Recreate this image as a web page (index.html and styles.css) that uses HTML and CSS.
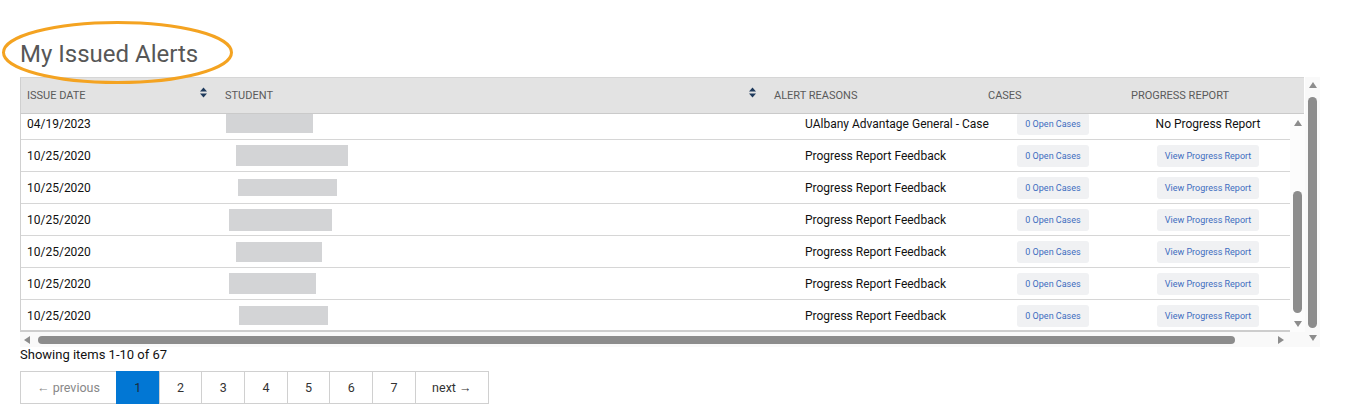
FILE: index.html
```html
<!DOCTYPE html>
<html lang="en">
<head>
<meta charset="utf-8">
<title>My Issued Alerts</title>
<link rel="stylesheet" href="styles.css">
</head>
<body>
<div class="page">
  <h1 class="title">My Issued Alerts</h1>
  <svg class="annot" viewBox="0 0 240 72" aria-hidden="true">
    <ellipse cx="117.5" cy="34.5" rx="114" ry="30" fill="none" stroke="#f4a321" stroke-width="3"/>
  </svg>

  <div class="grid">
    <div class="grid-main">
      <div class="g-head">
        <div class="th th-first"><span>Issue Date</span><svg class="sort" viewBox="0 0 7 10"><path d="M0 4 L3.5 0 L7 4 Z M0 6 L7 6 L3.5 10 Z"/></svg></div>
        <div class="th"><span>Student</span><svg class="sort" viewBox="0 0 7 10"><path d="M0 4 L3.5 0 L7 4 Z M0 6 L7 6 L3.5 10 Z"/></svg></div>
        <div class="th"><span>Alert Reasons</span></div>
        <div class="th"><span>Cases</span></div>
        <div class="th"><span>Progress Report</span></div>
      </div>

      <div class="g-mid">
        <div class="g-view">
          <div class="g-rows">
            <div class="tr">
              <div class="td td-date">04/19/2023</div>
              <div class="td td-student"><span class="ph" style="margin-left:8px;width:87px;height:19px"></span></div>
              <div class="td td-reason">UAlbany Advantage General - Case</div>
              <div class="td td-center"><span class="btn">0 Open Cases</span></div>
              <div class="td td-center">No Progress Report</div>
            </div>
            <div class="tr">
              <div class="td td-date">10/25/2020</div>
              <div class="td td-student"><span class="ph" style="margin-left:18px;width:112px;height:21px"></span></div>
              <div class="td td-reason">Progress Report Feedback</div>
              <div class="td td-center"><span class="btn">0 Open Cases</span></div>
              <div class="td td-center"><span class="btn">View Progress Report</span></div>
            </div>
            <div class="tr">
              <div class="td td-date">10/25/2020</div>
              <div class="td td-student"><span class="ph" style="margin-left:20px;width:99px;height:17px"></span></div>
              <div class="td td-reason">Progress Report Feedback</div>
              <div class="td td-center"><span class="btn">0 Open Cases</span></div>
              <div class="td td-center"><span class="btn">View Progress Report</span></div>
            </div>
            <div class="tr">
              <div class="td td-date">10/25/2020</div>
              <div class="td td-student"><span class="ph" style="margin-left:11px;width:103px;height:22px"></span></div>
              <div class="td td-reason">Progress Report Feedback</div>
              <div class="td td-center"><span class="btn">0 Open Cases</span></div>
              <div class="td td-center"><span class="btn">View Progress Report</span></div>
            </div>
            <div class="tr">
              <div class="td td-date">10/25/2020</div>
              <div class="td td-student"><span class="ph" style="margin-left:18px;width:86px;height:20px"></span></div>
              <div class="td td-reason">Progress Report Feedback</div>
              <div class="td td-center"><span class="btn">0 Open Cases</span></div>
              <div class="td td-center"><span class="btn">View Progress Report</span></div>
            </div>
            <div class="tr">
              <div class="td td-date">10/25/2020</div>
              <div class="td td-student"><span class="ph" style="margin-left:11px;width:87px;height:21px"></span></div>
              <div class="td td-reason">Progress Report Feedback</div>
              <div class="td td-center"><span class="btn">0 Open Cases</span></div>
              <div class="td td-center"><span class="btn">View Progress Report</span></div>
            </div>
            <div class="tr">
              <div class="td td-date">10/25/2020</div>
              <div class="td td-student"><span class="ph" style="margin-left:21px;width:89px;height:19px"></span></div>
              <div class="td td-reason">Progress Report Feedback</div>
              <div class="td td-center"><span class="btn">0 Open Cases</span></div>
              <div class="td td-center"><span class="btn">View Progress Report</span></div>
            </div>
          </div>
        </div>
        <div class="vs vs-inner">
          <span class="arr-up"></span>
          <span class="vthumb"></span>
          <span class="arr-down"></span>
        </div>
      </div>

      <div class="g-bottom">
        <div class="hs">
          <span class="arr-left"></span>
          <span class="hthumb"></span>
          <span class="arr-right"></span>
        </div>
        <div class="corner"></div>
      </div>
    </div>
    <div class="vs vs-outer">
      <span class="arr-up"></span>
      <span class="vthumb"></span>
      <span class="arr-down"></span>
    </div>
  </div>

  <div class="summary">Showing items 1-10 of 67</div>

  <nav class="pager">
    <a class="pg pg-prev">&larr; previous</a>
    <a class="pg pg-num pg-active">1</a>
    <a class="pg pg-num">2</a>
    <a class="pg pg-num">3</a>
    <a class="pg pg-num">4</a>
    <a class="pg pg-num">5</a>
    <a class="pg pg-num">6</a>
    <a class="pg pg-num">7</a>
    <a class="pg pg-next">next &rarr;</a>
  </nav>
</div>
</body>
</html>
```

FILE: styles.css
```css
* { box-sizing: border-box; }

html, body {
  margin: 0;
  padding: 0;
  background: #fff;
}

body {
  font-family: Roboto, "Liberation Sans", Arial, sans-serif;
  color: #111;
}

.page {
  position: relative;
  width: 1354px;
  height: 410px;
  padding: 40px 0 0 20px;
  overflow: hidden;
}

.title {
  margin: 0 0 9px;
  font-size: 24px;
  line-height: 28px;
  font-weight: 400;
  color: #575757;
}

.annot {
  position: absolute;
  left: 0;
  top: 18px;
  width: 240px;
  height: 72px;
  z-index: 5;
  pointer-events: none;
}

/* grid */
.grid {
  display: flex;
  width: 1300px;
  height: 270px;
}

.grid-main {
  width: 1285px;
  display: flex;
  flex-direction: column;
}

.g-head {
  width: 1284px;
  height: 37px;
  flex: none;
  background: #e3e3e3;
  border-top: 1px solid #d6d6d6;
  border-bottom: 1px solid #cacaca;
  border-left: 1px solid #d0d0d0;
  display: grid;
  grid-template-columns: 197px 549px 214px 143px 1fr;
}

.th {
  display: flex;
  align-items: center;
  justify-content: space-between;
  padding: 0 11px 0 7px;
  font-size: 11px;
  color: #5a5a5a;
  text-transform: uppercase;
  white-space: nowrap;
}

.th-first { padding-left: 6px; }

.sort {
  width: 7px;
  height: 11px;
  margin-bottom: 6px;
  fill: #1e3a5c;
}

.g-mid {
  display: flex;
  height: 218px;
  flex: none;
}

.g-view {
  width: 1270px;
  height: 218px;
  border-left: 1px solid #d0d0d0;
  border-bottom: 2px solid #cdcdcd;
  overflow: hidden;
}

.g-rows { margin-top: -6px; }

.tr {
  display: grid;
  grid-template-columns: 197px 580px 182px 146px 164px;
  height: 32px;
  border-bottom: 1px solid #d6d6d6;
  align-items: center;
  font-size: 12px;
  color: #111;
}

.td { white-space: nowrap; }
.td-date { padding-left: 6px; }
.td-student { display: flex; align-items: center; }
.ph { display: block; background: #d3d4d6; }
.td-reason { padding-left: 7px; }
.td-center { display: flex; justify-content: center; }

.btn {
  display: block;
  height: 22px;
  line-height: 22px;
  padding: 0 8px;
  border-radius: 3px;
  background: #f0f1f3;
  color: #3d6dc0;
  font-size: 9px;
}

/* scrollbars */
.vs {
  width: 15px;
  flex: none;
  background: #f9f9f9;
  display: flex;
  flex-direction: column;
  align-items: center;
}

.vs-inner { height: 218px; padding-top: 6px; background: #fcfcfc; }
.vs-outer { height: 270px; padding-top: 5px; }

.arr-up, .arr-down, .arr-left, .arr-right {
  display: block;
  width: 0;
  height: 0;
  flex: none;
}

.arr-up {
  border-left: 4.5px solid transparent;
  border-right: 4.5px solid transparent;
  border-bottom: 6px solid #8c8c8c;
}

.arr-down {
  border-left: 4.5px solid transparent;
  border-right: 4.5px solid transparent;
  border-top: 6px solid #8c8c8c;
}

.vthumb {
  display: block;
  width: 9px;
  border-radius: 5px;
  background: #8c8c8c;
  flex: none;
}

.vs-inner .vthumb { margin-top: 65px; height: 122px; }
.vs-inner .arr-down { margin-top: 8px; }
.vs-outer .vthumb { margin-top: 9px; height: 231px; }
.vs-outer .arr-down { margin-top: 7px; }

.g-bottom {
  display: flex;
  height: 15px;
  flex: none;
}

.hs {
  width: 1270px;
  display: flex;
  align-items: center;
  background: #f9f9f9;
}

.arr-left {
  margin-left: 4px;
  border-top: 4px solid transparent;
  border-bottom: 4px solid transparent;
  border-right: 6px solid #8c8c8c;
}

.hthumb {
  display: block;
  margin-left: 8px;
  width: 1197px;
  height: 8px;
  border-radius: 4px;
  background: #8c8c8c;
}

.arr-right {
  margin-left: 43px;
  border-top: 4px solid transparent;
  border-bottom: 4px solid transparent;
  border-left: 6px solid #8c8c8c;
}

.corner { width: 15px; background: #f9f9f9; }

/* footer */
.summary {
  font-size: 13px;
  line-height: 16px;
  color: #111;
}

.pager {
  display: flex;
  margin-top: 8px;
  height: 33px;
}

.pg {
  display: flex;
  align-items: center;
  justify-content: center;
  height: 33px;
  border: 1px solid #d0d0d0;
  border-right: none;
  font-size: 12.5px;
  color: #333;
  text-decoration: none;
}

.pg-prev { width: 96px; color: #888; }
.pg-num { width: 42.7px; }
.pg-next { width: 74px; border-right: 1px solid #d0d0d0; }

.pg-active {
  background: #0277d4;
  border-color: #0277d4;
  color: #1b2a3a;
}
```
